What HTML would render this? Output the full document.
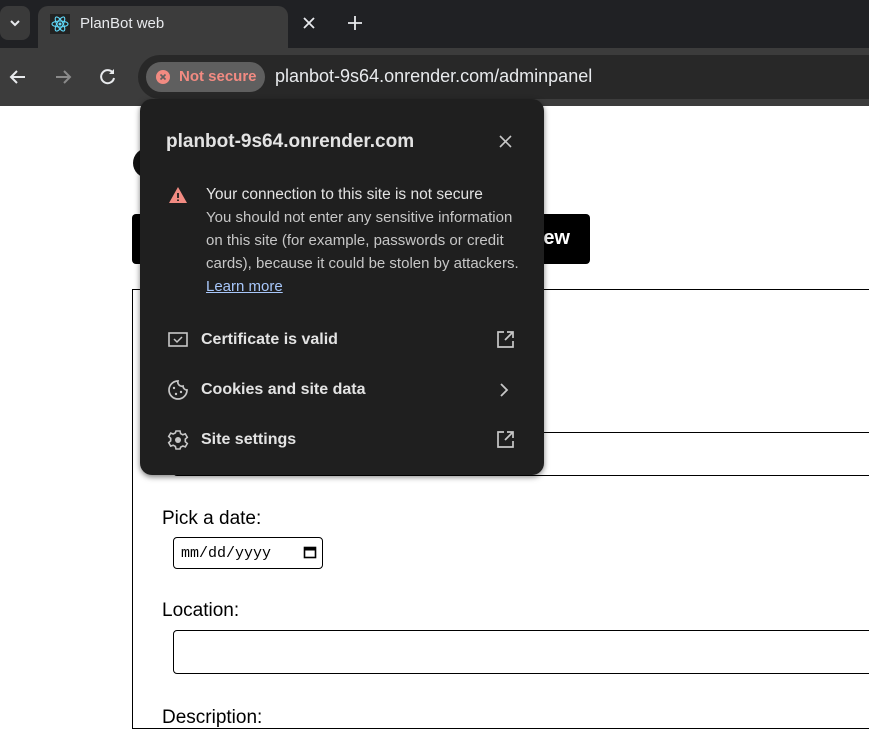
<!DOCTYPE html>
<html><head><style>
*{margin:0;padding:0;box-sizing:border-box}
body{width:869px;height:717px;overflow:hidden;background:#fff;font-family:"Liberation Sans",sans-serif;position:relative}
.abs{position:absolute}
</style></head><body>
<div class="abs" style="left:0;top:0;width:869px;height:48px;background:#202124"></div>
<div class="abs" style="left:0;top:6px;width:30px;height:34px;background:#3a3a3a;border-radius:8px"></div>
<svg class="abs" style="left:8px;top:18px" width="14" height="10"><path d="M3 3l4 4 4-4" stroke="#e8eaed" stroke-width="2" fill="none"/></svg>
<div class="abs" style="left:38px;top:6px;width:250px;height:42px;background:#3c3c3c;border-radius:10px 10px 0 0"></div>
<svg class="abs" style="left:50px;top:14px" width="20" height="20" viewBox="0 0 20 20"><rect width="20" height="20" fill="#222"/><g fill="none" stroke="#61dafb" stroke-width="1.1"><ellipse cx="10" cy="10" rx="8" ry="3"/><ellipse cx="10" cy="10" rx="8" ry="3" transform="rotate(60 10 10)"/><ellipse cx="10" cy="10" rx="8" ry="3" transform="rotate(120 10 10)"/></g><circle cx="10" cy="10" r="1.5" fill="#61dafb"/></svg>
<div class="abs" style="left:80px;top:15px;color:#e8eaed;font-size:15px">PlanBot web</div>
<svg class="abs" style="left:302px;top:16px" width="14" height="14"><path d="M2 2l10 10M12 2L2 12" stroke="#e8eaed" stroke-width="1.8"/></svg>
<svg class="abs" style="left:347px;top:15px" width="16" height="16"><path d="M8 1v14M1 8h14" stroke="#e8eaed" stroke-width="1.8"/></svg>
<div class="abs" style="left:0;top:48px;width:869px;height:58px;background:#3c3c3c"></div>
<svg class="abs" style="left:8px;top:68px" width="20" height="18"><path d="M17 9H3M9 3L3 9l6 6" stroke="#e8eaed" stroke-width="2" fill="none"/></svg>
<svg class="abs" style="left:53px;top:68px" width="20" height="18"><path d="M3 9h14M11 3l6 6-6 6" stroke="#8a8a8a" stroke-width="2" fill="none"/></svg>
<svg class="abs" style="left:98px;top:67px" width="20" height="20"><path d="M15 6A6.5 6.5 0 1 0 16 11" stroke="#e8eaed" stroke-width="2" fill="none"/><path d="M16 2v5h-5" fill="#e8eaed"/></svg>
<div class="abs" style="left:138px;top:55px;width:731px;height:44px;background:#282828;border-radius:22px 0 0 22px"></div>
<div class="abs" style="left:146px;top:62px;width:119px;height:30px;background:#5f5f5f;border-radius:15px"></div>
<svg class="abs" style="left:155px;top:69px" width="16" height="16"><circle cx="8" cy="8" r="7" fill="#f28b82"/><path d="M5.5 5.5l5 5M10.5 5.5l-5 5" stroke="#5f5f5f" stroke-width="1.6"/></svg>
<div class="abs" style="left:179px;top:68px;color:#f28b82;font-size:15px;font-weight:bold">Not secure</div>
<div class="abs" style="left:275px;top:66px;color:#e8eaed;font-size:18px">planbot-9s64.onrender.com/adminpanel</div>
<div class="abs" style="left:133px;top:148px;width:30px;height:30px;background:#111;border-radius:50%"></div>
<div class="abs" style="left:132px;top:214px;width:458px;height:50px;background:#000;border-radius:4px;color:#fff;font-size:20px;font-weight:bold;text-align:right;padding:13px 20px 0 0">ew</div>
<div class="abs" style="left:132px;top:289px;width:760px;height:440px;border:1px solid #000"></div>
<div class="abs" style="left:173px;top:432px;width:720px;height:44px;border:1px solid #000;border-radius:4px"></div>
<div class="abs" style="left:162px;top:508px;font-size:19px;color:#000">Pick a date:</div>
<div class="abs" style="left:173px;top:537px;width:150px;height:32px;border:1px solid #000;border-radius:4px;font-family:'Liberation Mono',monospace;font-size:15px;padding:7px 0 0 7px">mm/dd/yyyy</div>
<svg class="abs" style="left:303px;top:545px" width="14" height="14"><rect x="1.5" y="2.5" width="11" height="10" fill="none" stroke="#000" stroke-width="1.6"/><rect x="1.5" y="2.5" width="11" height="3" fill="#000"/></svg>
<div class="abs" style="left:162px;top:600px;font-size:19px;color:#000">Location:</div>
<div class="abs" style="left:173px;top:630px;width:720px;height:44px;border:1px solid #000;border-radius:4px"></div>
<div class="abs" style="left:162px;top:707px;font-size:19px;color:#000">Description:</div>
<div class="abs" style="left:140px;top:99px;width:404px;height:376px;background:#1f1f1f;border-radius:12px;box-shadow:0 2px 6px rgba(0,0,0,.5);color:#e3e3e3">
<div class="abs" style="left:26px;top:32px;font-size:19px;font-weight:bold;color:#e3e3e3">planbot-9s64.onrender.com</div>
<svg class="abs" style="left:359px;top:36px" width="13" height="13"><path d="M1 1l11 11M12 1L1 12" stroke="#c7c7c7" stroke-width="1.6"/></svg>
<svg class="abs" style="left:28px;top:87px" width="20" height="18"><path d="M10 1L19 17H1z" fill="#f28b82"/><path d="M10 7v5M10 13.5v1.5" stroke="#1f1f1f" stroke-width="1.8"/></svg>
<div class="abs" style="left:66px;top:87px;font-size:15.5px;color:#e3e3e3">Your connection to this site is not secure</div>
<div class="abs" style="left:66px;top:107px;font-size:15px;line-height:23px;color:#c7c7c7;width:316px">You should not enter any sensitive information on this site (for example, passwords or credit cards), because it could be stolen by attackers.</div>
<div class="abs" style="left:66px;top:179px;font-size:15px;color:#a8c7fa;text-decoration:underline">Learn more</div>
<svg class="abs" style="left:28px;top:233px" width="20" height="16"><rect x="1" y="1" width="18" height="13" fill="none" stroke="#c7c7c7" stroke-width="1.6"/><path d="M6 7l3 3 5-5" stroke="#c7c7c7" stroke-width="1.5" fill="none"/></svg>
<div class="abs" style="left:61px;top:232px;font-size:16px;font-weight:bold">Certificate is valid</div>
<svg class="abs" style="left:356px;top:231px" width="19" height="19"><path d="M8 2H2v15h15v-6M11 2h6v6M17 2l-8 8" stroke="#c7c7c7" stroke-width="1.7" fill="none"/></svg>
<svg class="abs" style="left:27px;top:280px" width="22" height="22"><path d="M11 2a9 9 0 1 0 9 9 4 4 0 0 1-4-4 4 4 0 0 1-5-5z" fill="none" stroke="#c7c7c7" stroke-width="1.7"/><circle cx="7" cy="9" r="1.2" fill="#c7c7c7"/><circle cx="9" cy="15" r="1.2" fill="#c7c7c7"/><circle cx="14" cy="13" r="1.2" fill="#c7c7c7"/></svg>
<div class="abs" style="left:61px;top:282px;font-size:16px;font-weight:bold">Cookies and site data</div>
<svg class="abs" style="left:358px;top:283px" width="12" height="16"><path d="M3 2l6 6-6 6" stroke="#c7c7c7" stroke-width="1.8" fill="none"/></svg>
<svg class="abs" style="left:27px;top:330px" width="22" height="22" viewBox="0 0 22 22"><circle cx="11" cy="11" r="3" fill="#c7c7c7"/><path d="M9 2h4l.6 2.6 2.2 1.2 2.5-.9 2 3.4-2 1.8v2.6l2 1.8-2 3.4-2.5-.9-2.2 1.2L13 20H9l-.6-2.6-2.2-1.2-2.5.9-2-3.4 2-1.8V9.3l-2-1.8 2-3.4 2.5.9 2.2-1.2z" fill="none" stroke="#c7c7c7" stroke-width="1.6"/></svg>
<div class="abs" style="left:61px;top:332px;font-size:16px;font-weight:bold">Site settings</div>
<svg class="abs" style="left:356px;top:331px" width="19" height="19"><path d="M8 2H2v15h15v-6M11 2h6v6M17 2l-8 8" stroke="#c7c7c7" stroke-width="1.7" fill="none"/></svg>
</div>
</body></html>
